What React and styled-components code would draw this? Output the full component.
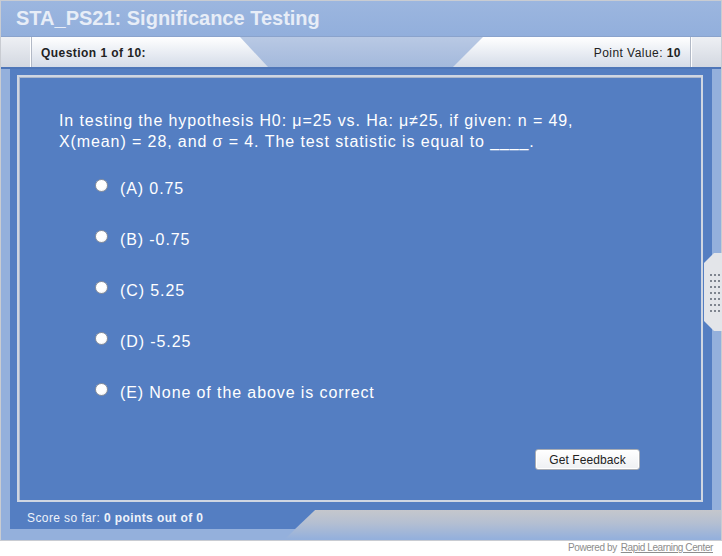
import React from "react";
import styled, { createGlobalStyle } from "styled-components";

const Global = createGlobalStyle`
  html, body { margin: 0; padding: 0; background: #ffffff; }
  body { font-family: "Liberation Sans", Arial, sans-serif; }
`;

const Frame = styled.div`
  position: relative;
  width: 722px;
  height: 541px;
  box-sizing: border-box;
  border: 1px solid #c9ccd2;
  background: #94b0dc;
  display: flex;
  flex-direction: column;
`;

const TitleBar = styled.div`
  height: 36px;
  border-bottom: 1px solid #8aa3cc;
  background: linear-gradient(#9cb6df, #92afdc);
  display: flex;
  align-items: center;
  padding-left: 15px;
  font-size: 20px;
  font-weight: bold;
  color: #e7edf7;
  padding-bottom: 1px;
  box-sizing: border-box;
`;

const TabBar = styled.div`
  height: 32px;
  box-sizing: border-box;
  border-bottom: 2px solid #4e76b8;
  background: linear-gradient(#b9c9e4, #a3b9dc);
  display: flex;
  justify-content: space-between;
  font-size: 12px;
  letter-spacing: 0.45px;
  color: #222;
`;

const Tab = styled.div`
  width: ${(p) => p.$w}px;
  height: 100%;
  display: flex;
  align-items: center;
  justify-content: ${(p) => (p.$right ? "flex-end" : "flex-start")};
  background: linear-gradient(#ffffff 0%, #eef1f6 40%, #d5dce8 100%);
  clip-path: ${(p) =>
    p.$right
      ? "polygon(30px 0, 100% 0, 100% 100%, 0 100%)"
      : "polygon(0 0, calc(100% - 28px) 0, 100% 100%, 0 100%)"};
`;

const EdgeCell = styled.div`
  width: 31px;
  height: 100%;
  box-sizing: border-box;
  background: linear-gradient(#eef0f4, #d3d8e1);
  ${(p) =>
    p.$right
      ? "border-left: 1px solid #b2b9c6; box-shadow: inset 1px 0 0 #ffffff;"
      : "border-right: 1px solid #b2b9c6; box-shadow: inset -1px 0 0 #ffffff;"}
`;

const TabLabel = styled.div`
  padding: ${(p) => (p.$right ? "1px 9px 0 0" : "1px 0 0 9px")};
  white-space: nowrap;
  b { font-weight: bold; }
`;

const Content = styled.div`
  height: 441px;
  margin: 0 9px;
  background: #547ec2;
  box-sizing: border-box;
  padding: 6px 9px 8px 7px;
  display: flex;
`;

const Panel = styled.div`
  flex: 1;
  border: 2px solid #cfd6e2;
  box-shadow: inset 1px 1px 0 #aab6cc;
  display: flex;
  flex-direction: column;
  color: #ffffff;
  font-size: 16px;
  line-height: 21px;
  letter-spacing: 0.9px;
`;

const Question = styled.div`
  padding: 33px 60px 0 40px;
`;

const Options = styled.div`
  display: flex;
  flex-direction: column;
  gap: 30px;
  padding: 26px 0 0 76px;
`;

const Option = styled.label`
  display: flex;
  align-items: center;
  gap: 12px;
`;

const Radio = styled.span`
  width: 13px;
  height: 13px;
  box-sizing: border-box;
  border-radius: 50%;
  border: 1px solid #8e939c;
  background: radial-gradient(circle at 40% 35%, #ffffff 55%, #e2e4e8 100%);
  margin-top: -7px;
`;

const ButtonRow = styled.div`
  margin-top: auto;
  display: flex;
  justify-content: flex-end;
  padding: 0 61px 30px 0;
`;

const Button = styled.button`
  width: 105px;
  height: 21px;
  border: 1px solid #a9adb4;
  border-radius: 3px;
  background: linear-gradient(#ffffff, #eef0f3);
  font-family: "Liberation Sans", Arial, sans-serif;
  font-size: 12px;
  letter-spacing: 0.1px;
  color: #222;
  padding: 0;
  box-shadow: inset 0 0 0 1px #ffffff;
`;

const Footer = styled.div`
  height: 29px;
  display: flex;
`;

const ScoreTab = styled.div`
  position: relative;
  z-index: 1;
  width: 305px;
  margin-left: 9px;
  height: 19px;
  background: #547ec2;
  clip-path: polygon(0 0, 100% 0, calc(100% - 20px) 100%, 0 100%);
  color: #eef2fa;
  font-size: 12px;
  letter-spacing: 0.4px;
  padding: 1px 0 0 17px;
  box-sizing: border-box;
  b { font-weight: bold; }
`;

const GrayBar = styled.div`
  flex: 1;
  margin-left: -30px;
  background: linear-gradient(#c5c7cc 0%, #b4bfd2 45%, #94b0dc 100%);
  clip-path: polygon(30px 0, 100% 0, 100% 100%, 0 100%);
`;

const Handle = styled.div`
  position: absolute;
  left: 703px;
  top: 252px;
  width: 18px;
  height: 78px;
  background: #e3e5e9;
  clip-path: polygon(10px 0, 100% 0, 100% 100%, 10px 100%, 0 calc(100% - 10px), 0 10px);
  display: grid;
  grid-template-columns: repeat(3, 2px);
  grid-auto-rows: 2px;
  column-gap: 2px;
  row-gap: 4px;
  padding: 21px 0 0 6px;
  box-sizing: border-box;
`;

const Dot = styled.span`
  background: #7f858f;
`;

const Powered = styled.div`
  width: 722px;
  display: flex;
  justify-content: flex-end;
  gap: 4px;
  padding: 1px 9px 0 0;
  box-sizing: border-box;
  font-size: 10px;
  letter-spacing: -0.4px;
  color: #8d8d8d;
  span.link { text-decoration: underline; }
`;

const options = [
  "(A) 0.75",
  "(B) -0.75",
  "(C) 5.25",
  "(D) -5.25",
  "(E) None of the above is correct",
];

export default function App() {
  return (
    <>
      <Global />
      <Frame>
        <TitleBar>STA_PS21: Significance Testing</TitleBar>
        <TabBar>
          <Tab $w={267}>
            <EdgeCell />
            <TabLabel>
              <b>Question 1 of 10:</b>
            </TabLabel>
          </Tab>
          <Tab $w={268} $right>
            <TabLabel $right>
              Point Value: <b>10</b>
            </TabLabel>
            <EdgeCell $right />
          </Tab>
        </TabBar>
        <Content>
          <Panel>
            <Question>
              In testing the hypothesis H0: μ=25 vs. Ha: μ≠25, if given: n = 49,
              X(mean) = 28, and σ = 4. The test statistic is equal to ____.
            </Question>
            <Options>
              {options.map((o) => (
                <Option key={o}>
                  <Radio />
                  <span>{o}</span>
                </Option>
              ))}
            </Options>
            <ButtonRow>
              <Button>Get Feedback</Button>
            </ButtonRow>
          </Panel>
        </Content>
        <Footer>
          <ScoreTab>
            Score so far: <b>0 points out of 0</b>
          </ScoreTab>
          <GrayBar />
        </Footer>
        <Handle>
          {Array.from({ length: 21 }).map((_, i) => (
            <Dot key={i} />
          ))}
        </Handle>
      </Frame>
      <Powered>
        <span>Powered by</span>
        <span className="link">Rapid Learning Center</span>
      </Powered>
    </>
  );
}
